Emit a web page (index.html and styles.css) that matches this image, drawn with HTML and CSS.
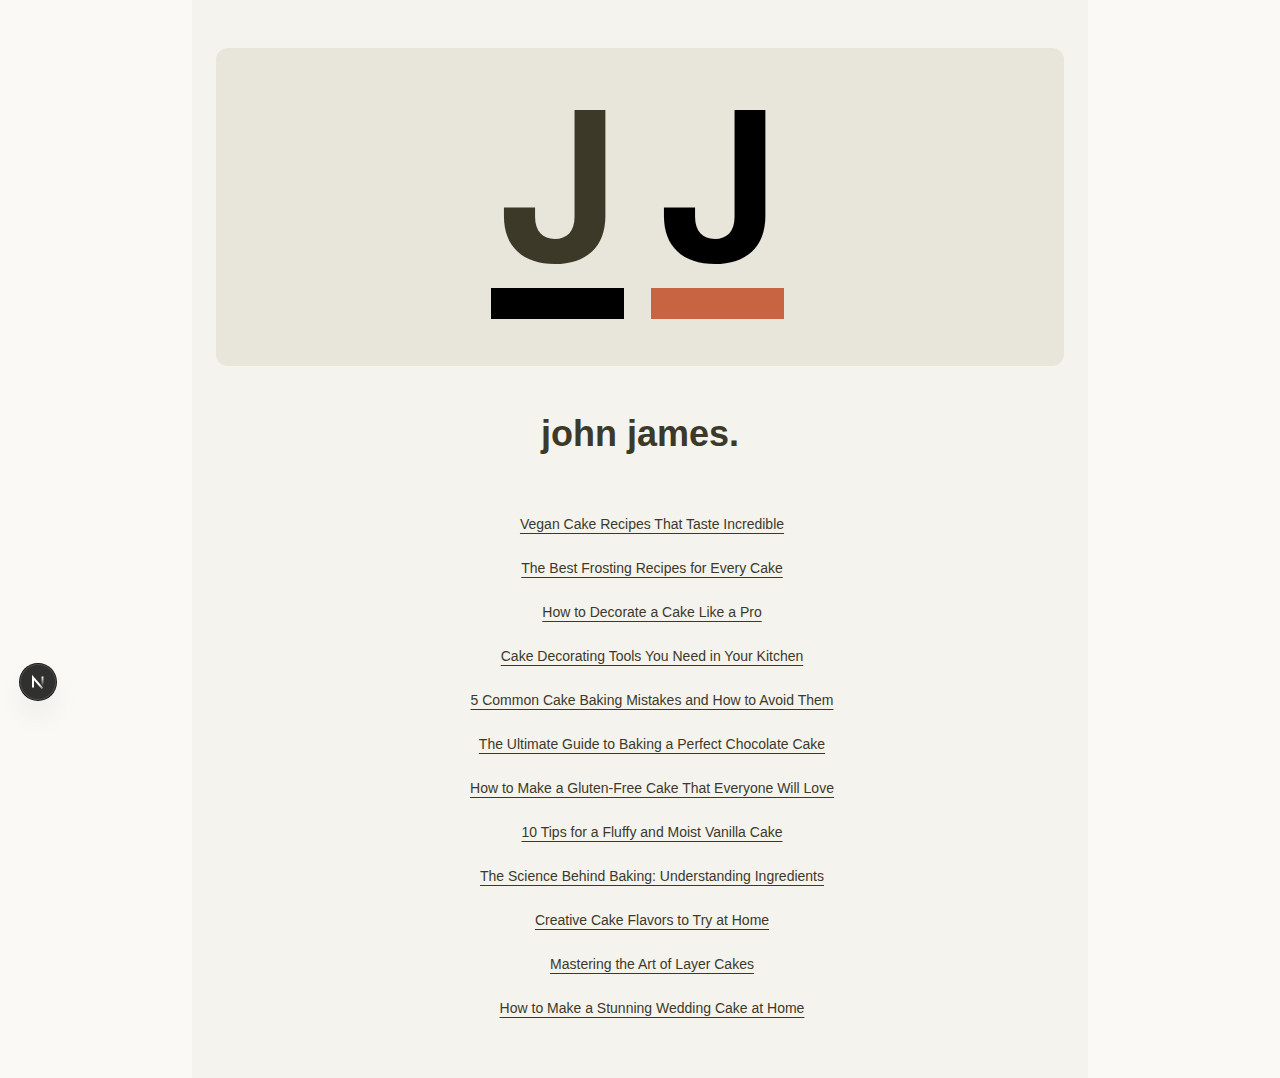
FILE: index.html
```html
<!DOCTYPE html>
<html lang="en">
<head>
<meta charset="utf-8">
<meta name="viewport" content="width=device-width, initial-scale=1">
<title>john james.</title>
<link rel="stylesheet" href="styles.css">
</head>
<body>
<main class="page">
  <svg class="banner" viewBox="0 0 848 318" role="img" aria-label="JJ">
    <text class="initial initial-olive" x="281" y="214">J</text>
    <text class="initial" x="441" y="214">J</text>
    <rect x="275" y="240" width="133" height="31" fill="#000"/>
    <rect x="435" y="240" width="133" height="31" fill="#c96442"/>
  </svg>
  <h1 class="title">john james.</h1>
  <ul class="posts">
    <li><a href="#">Vegan Cake Recipes That Taste Incredible</a></li>
    <li><a href="#">The Best Frosting Recipes for Every Cake</a></li>
    <li><a href="#">How to Decorate a Cake Like a Pro</a></li>
    <li><a href="#">Cake Decorating Tools You Need in Your Kitchen</a></li>
    <li><a href="#">5 Common Cake Baking Mistakes and How to Avoid Them</a></li>
    <li><a href="#">The Ultimate Guide to Baking a Perfect Chocolate Cake</a></li>
    <li><a href="#">How to Make a Gluten-Free Cake That Everyone Will Love</a></li>
    <li><a href="#">10 Tips for a Fluffy and Moist Vanilla Cake</a></li>
    <li><a href="#">The Science Behind Baking: Understanding Ingredients</a></li>
    <li><a href="#">Creative Cake Flavors to Try at Home</a></li>
    <li><a href="#">Mastering the Art of Layer Cakes</a></li>
    <li><a href="#">How to Make a Stunning Wedding Cake at Home</a></li>
  </ul>
</main>
<button class="dev-badge" type="button" aria-label="Open developer tools">
  <svg width="14" height="14" viewBox="0 0 14 14" fill="none">
    <defs>
      <linearGradient id="fade-diagonal" x1="9" y1="9" x2="14" y2="16" gradientUnits="userSpaceOnUse">
        <stop stop-color="#fff"/><stop offset="1" stop-color="#fff" stop-opacity="0"/>
      </linearGradient>
      <linearGradient id="fade-stem" x1="11" y1="1" x2="11" y2="11" gradientUnits="userSpaceOnUse">
        <stop stop-color="#fff"/><stop offset="1" stop-color="#fff" stop-opacity="0"/>
      </linearGradient>
    </defs>
    <path d="M2 12.5V2.5L11.5 13.5" stroke="url(#fade-diagonal)" stroke-width="2"/>
    <path d="M11.5 1.5V11" stroke="url(#fade-stem)" stroke-width="2"/>
  </svg>
</button>
</body>
</html>
```
FILE: styles.css
```css
* { box-sizing: border-box; }
body {
  margin: 0;
  background: #faf9f5;
  color: #3d3929;
  font-family: "Liberation Sans", Arial, sans-serif;
}
.page {
  max-width: 896px;
  min-height: 100vh;
  margin: 0 auto;
  padding: 48px 24px;
  background: #f4f3ee;
}
.banner {
  display: block;
  width: 100%;
  border-radius: 12px;
  background: #e8e6da;
}
.initial {
  font-family: Inter, sans-serif;
  font-size: 209px;
  font-weight: 750;
  fill: #000;
}
.initial-olive { fill: #3d3929; }
.title {
  margin: 48px 0 56px;
  font-size: 36px;
  line-height: 40px;
  font-weight: 700;
  text-align: center;
}
.posts {
  display: flex;
  flex-direction: column;
  gap: 16px;
  margin: 0 0 0 24px;
  padding: 0;
  list-style: none;
  font-size: 14px;
  line-height: 28px;
  text-align: center;
}
.posts a {
  color: inherit;
  text-decoration: underline;
  text-decoration-thickness: 1px;
  text-underline-offset: 4px;
}
.dev-badge {
  position: fixed;
  left: 20px;
  bottom: 378px;
  display: flex;
  align-items: center;
  justify-content: center;
  width: 36px;
  height: 36px;
  padding: 0;
  border: 0;
  border-radius: 50%;
  background: #30302e;
  box-shadow: 0 0 0 1px #171717, inset 0 0 0 1px #4c4c4a, 0 16px 32px -8px rgba(0, 0, 0, 0.2);
}
```
